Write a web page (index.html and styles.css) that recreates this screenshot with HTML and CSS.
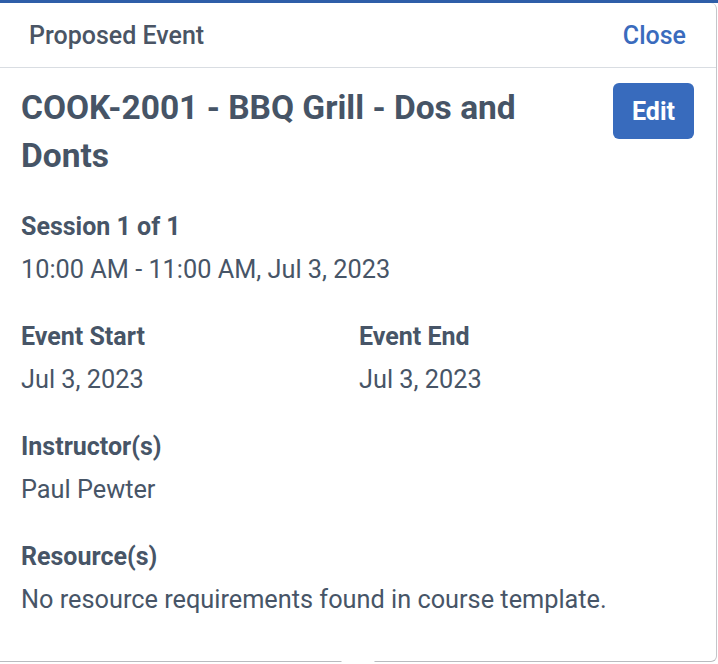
FILE: index.html
```html
<!DOCTYPE html>
<html lang="en">
<head>
  <meta charset="UTF-8" />
  <meta name="viewport" content="width=device-width, initial-scale=1.0">
  <title>Proposed Event</title>
  <link rel="stylesheet" href="styles.css">
</head>
<body>

  <div class="popover">
    <div class="popover-header">
      <h2>Proposed Event</h2>
      <a href="#" class="close-link">Close</a>
    </div>

    <div class="popover-body">
      <div class="title-row">
        <h1>COOK-2001 - BBQ Grill - Dos and Donts</h1>
        <button type="button" class="edit-btn">Edit</button>
      </div>

      <div class="field">
        <div class="field-label">Session 1 of 1</div>
        <div class="field-value">10:00 AM - 11:00 AM, Jul 3, 2023</div>
      </div>

      <div class="field-row">
        <div class="field">
          <div class="field-label">Event Start</div>
          <div class="field-value">Jul 3, 2023</div>
        </div>
        <div class="field">
          <div class="field-label">Event End</div>
          <div class="field-value">Jul 3, 2023</div>
        </div>
      </div>

      <div class="field">
        <div class="field-label">Instructor(s)</div>
        <div class="field-value">Paul Pewter</div>
      </div>

      <div class="field last">
        <div class="field-label">Resource(s)</div>
        <div class="field-value">No resource requirements found in course template.</div>
      </div>
    </div>
  </div>

</body>
</html>
```

FILE: styles.css
```css
* {
  box-sizing: border-box;
}
body {
  margin: 0;
  font-family: Roboto, "Liberation Sans", Arial, sans-serif;
  background: #ffffff;
  border-top: 3px solid #2f5ea8;
  height: 100vh;
  overflow: hidden;
}

.popover {
  position: relative;
  width: 717px;
  background: white;
  border-right: 1px solid #c4c6ca;
  border-bottom: 1px solid #b9bbbf;
  border-radius: 0 6px 6px 0;
  color: #475567;
}
.popover::after {
  content: "";
  position: absolute;
  left: 346px;
  bottom: -13px;
  width: 24px;
  height: 24px;
  background: white;
  transform: rotate(45deg);
}

.popover-header {
  height: 65px;
  padding: 0 30px 0 29px;
  display: flex;
  align-items: center;
  justify-content: space-between;
  border-bottom: 1px solid #d9dde2;
}
.popover-header h2 {
  margin: 0;
  font-size: 25px;
  font-weight: 500;
  color: #4a5565;
}
.close-link {
  color: #3a6bbd;
  text-decoration: none;
  font-size: 25px;
  font-weight: 500;
}

.popover-body {
  padding: 16px 22px 47px 21px;
}

.title-row {
  display: flex;
  justify-content: space-between;
  align-items: flex-start;
  gap: 30px;
  margin-bottom: 33px;
}
h1 {
  margin: 0;
  font-size: 33.5px;
  line-height: 48px;
  font-weight: 700;
  color: #465466;
  max-width: 540px;
}
.edit-btn {
  flex-shrink: 0;
  width: 81px;
  height: 56px;
  margin-top: -1px;
  border: none;
  border-radius: 6px;
  background-color: #386bbd;
  color: white;
  font-family: inherit;
  font-size: 25px;
  font-weight: 700;
}

.field {
  margin-bottom: 39px;
}
.field.last {
  margin-bottom: 0;
}
.field-label {
  font-size: 25px;
  line-height: 28px;
  font-weight: 700;
  color: #475567;
}
.field-value {
  margin-top: 15px;
  font-size: 25.3px;
  line-height: 28px;
  color: #475567;
}

.field-row {
  display: grid;
  grid-template-columns: 338px 1fr;
}
```
